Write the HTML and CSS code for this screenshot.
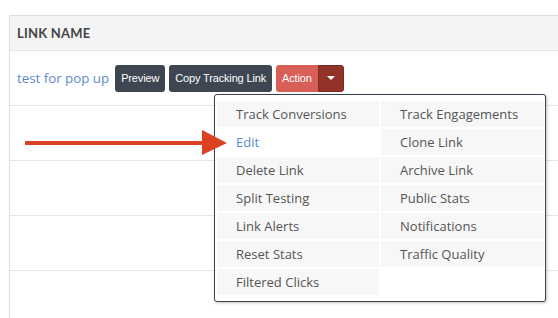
FILE: index.html
```html
<!DOCTYPE html>
<html lang="en">
<head>
    <meta charset="UTF-8">
    <title>Links</title>
    <link rel="stylesheet" href="styles.css">
</head>
<body>
    <div class="table">
        <div class="thead">LINK NAME</div>
        <div class="row first">
            <a class="link-name" href="#">test for pop up</a>
            <button class="btn dark">Preview</button>
            <button class="btn dark">Copy Tracking Link</button>
            <div class="btn-group">
                <button class="btn red">Action</button>
                <button class="btn red caret-btn"><span class="caret"></span></button>
                <ul class="menu">
                    <li>Track Conversions</li>
                    <li>Track Engagements</li>
                    <li class="active">Edit</li>
                    <li>Clone Link</li>
                    <li>Delete Link</li>
                    <li>Archive Link</li>
                    <li>Split Testing</li>
                    <li>Public Stats</li>
                    <li>Link Alerts</li>
                    <li>Notifications</li>
                    <li>Reset Stats</li>
                    <li>Traffic Quality</li>
                    <li>Filtered Clicks</li>
                </ul>
            </div>
        </div>
        <div class="row"></div>
        <div class="row"></div>
        <div class="row"></div>
        <div class="row"></div>
    </div>

    <svg class="pointer" width="204" height="26" viewBox="0 0 204 26">
        <rect x="0" y="11" width="180" height="4" fill="#da4222"/>
        <polygon points="177,0 202,13 177,25" fill="#da4222"/>
    </svg>
</body>
</html>
```

FILE: styles.css
```css
* {
    box-sizing: border-box;
    margin: 0;
    padding: 0;
}
body {
    background: #fff;
    font-family: 'Open Sans', sans-serif;
    padding: 15px 0 0 9px;
    overflow: hidden;
}
.table {
    border-top: 1px solid #dedede;
    border-left: 1px solid #dedede;
}
.thead {
    height: 35px;
    background: #f4f4f4;
    border-bottom: 1px solid #e6e6e6;
    padding-left: 7px;
    display: flex;
    align-items: center;
    font-family: 'Lato', sans-serif;
    font-size: 13px;
    font-weight: bold;
    letter-spacing: 0.2px;
    color: #454545;
}
.row {
    height: 55px;
    border-bottom: 1px solid #e6e6e6;
    display: flex;
    align-items: center;
    padding-left: 7px;
}
.link-name {
    color: #5a8bcb;
    text-decoration: none;
    font-size: 13.3px;
    margin-right: 6px;
}
.btn {
    font-family: 'Liberation Sans', Arial, sans-serif;
    font-size: 11px;
    letter-spacing: -0.15px;
    color: #fff;
    border: none;
    height: 27px;
    padding: 0 6px;
    border-radius: 3px;
    margin-right: 4px;
}
.dark {
    background: #3e4652;
}
.btn-group {
    position: relative;
    display: flex;
}
.btn-group .btn {
    margin: 0;
}
.red {
    background: #d75f55;
    border-radius: 3px 0 0 3px;
    padding: 0 6px;
}
.caret-btn {
    width: 26px;
    background: #92332a;
    border-radius: 0 3px 3px 0;
    border: 1px solid #7a2a22;
    display: flex;
    align-items: center;
    justify-content: center;
}
.caret {
    border-top: 4px solid #fff;
    border-left: 4px solid transparent;
    border-right: 4px solid transparent;
}
.menu {
    position: absolute;
    top: 29px;
    left: -62px;
    width: 332px;
    list-style: none;
    background: #fff;
    border: 1px solid #3b4450;
    border-radius: 3px;
    box-shadow: 1px 1px 3px rgba(0, 0, 0, 0.25);
    padding: 6px 1px 6px 2px;
    display: grid;
    grid-template-columns: 162px 163px;
    gap: 2px;
}
.menu li {
    height: 26px;
    background: #f7f7f7;
    color: #555;
    font-size: 13px;
    display: flex;
    align-items: center;
    padding-left: 19px;
}
.menu li.active {
    background: #fff;
    color: #5a8bcb;
}
.pointer {
    position: absolute;
    left: 25px;
    top: 130px;
}
```
